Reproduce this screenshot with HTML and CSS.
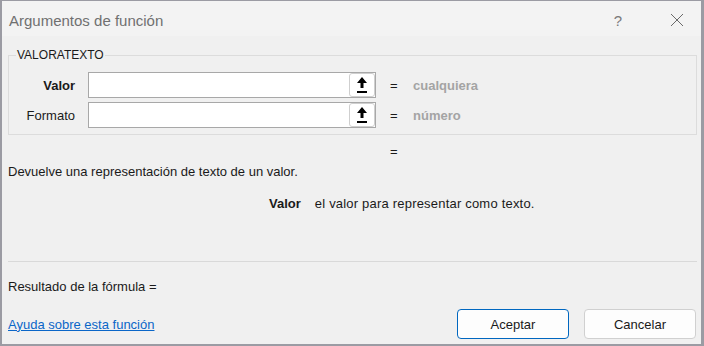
FILE: index.html
```html
<!DOCTYPE html>
<html lang="es">
<head>
<meta charset="utf-8">
<title>Argumentos de función</title>
<link rel="stylesheet" href="styles.css">
</head>
<body>
<div class="window">
  <div class="titlebar">
    <div class="title">Argumentos de función</div>
    <div class="help">?</div>
    <div class="close">
      <svg width="14" height="14" viewBox="0 0 14 14"><path d="M1 1 L13 13 M13 1 L1 13" stroke="#6a6a6a" stroke-width="1" fill="none"/></svg>
    </div>
  </div>
  <div class="content">
    <div class="group">
      <div class="legend">VALORATEXTO</div>
      <div class="row">
        <div class="label strong">Valor</div>
        <div class="field">
          <div class="ref-btn">
            <svg width="26" height="24" viewBox="0 0 26 24"><path d="M13 4 L18 10 L14.5 10 L14.5 15 L11.5 15 L11.5 10 L8 10 Z" fill="#000"/><rect x="8" y="18" width="10" height="2" fill="#000"/></svg>
          </div>
        </div>
        <div class="eq">=</div>
        <div class="value">cualquiera</div>
      </div>
      <div class="row">
        <div class="label">Formato</div>
        <div class="field">
          <div class="ref-btn">
            <svg width="26" height="24" viewBox="0 0 26 24"><path d="M13 4 L18 10 L14.5 10 L14.5 15 L11.5 15 L11.5 10 L8 10 Z" fill="#000"/><rect x="8" y="18" width="10" height="2" fill="#000"/></svg>
          </div>
        </div>
        <div class="eq">=</div>
        <div class="value">número</div>
      </div>
    </div>
    <div class="total-eq">=</div>
    <div class="desc">Devuelve una representación de texto de un valor.</div>
    <div class="argdesc"><span class="strong argname">Valor</span><span class="argtext">el valor para representar como texto.</span></div>
    <div class="sep"></div>
    <div class="result">Resultado de la fórmula =</div>
    <div class="footer">
      <a class="help-link" href="#">Ayuda sobre esta función</a>
      <div class="buttons">
        <button class="btn primary">Aceptar</button>
        <button class="btn">Cancelar</button>
      </div>
    </div>
  </div>
</div>
</body>
</html>
```
FILE: styles.css
```css
html, body {
  margin: 0;
  padding: 0;
  overflow: hidden;
}
body {
  font-family: "Liberation Sans", Arial, sans-serif;
  font-size: 13px;
  color: #1a1a1a;
  background: #f0f0f0;
}
.window {
  box-sizing: border-box;
  width: 704px;
  height: 346px;
  border-style: solid;
  border-color: #9b9ba3;
  border-width: 1px 3px 2px 2px;
  background: #f0f0f0;
}
.titlebar {
  height: 35px;
  background: #f3f3f3;
  display: flex;
  align-items: center;
  padding-left: 7px;
}
.title {
  font-size: 15px;
  color: #707070;
  flex: 1;
  padding-top: 3px;
}
.help {
  font-size: 15px;
  color: #7a7a7a;
  margin-right: 48px;
  padding-top: 3px;
}
.close {
  width: 14px;
  height: 14px;
  margin-right: 17px;
  margin-top: 3px;
}
.close svg { display: block; }
.content {
  padding: 0 4px 0 6px;
}
.group {
  position: relative;
  margin-top: 19px;
  border: 1px solid #dcdcdc;
  padding: 16px 0 6px 0;
}
.legend {
  position: absolute;
  top: -8px;
  left: 7px;
  padding: 0 1px;
  background: #f0f0f0;
  font-size: 12px;
  line-height: 14px;
  color: #1a1a1a;
}
.row {
  display: flex;
  align-items: center;
  height: 26px;
}
.row + .row {
  margin-top: 4px;
}
.label {
  width: 66px;
  margin-right: 13px;
  text-align: right;
}
.strong {
  font-weight: bold;
}
.field {
  box-sizing: border-box;
  width: 288px;
  height: 26px;
  border: 1px solid #a8a8a8;
  background: #fff;
  display: flex;
  justify-content: flex-end;
  align-items: center;
}
.ref-btn {
  box-sizing: border-box;
  width: 26px;
  height: 24px;
  border: 1px solid #cfcfcf;
  border-radius: 3px;
  background: #fff;
}
.ref-btn svg {
  display: block;
  margin: -1px;
}
.eq {
  margin-left: 14px;
  width: 23px;
}
.value {
  font-weight: bold;
  color: #a4a4a4;
}
.total-eq {
  margin-top: 9px;
  margin-left: 382px;
  line-height: 16px;
  height: 16px;
}
.desc {
  margin-top: 4px;
  line-height: 16px;
  height: 16px;
}
.argdesc {
  margin-top: 16px;
  padding-left: 261px;
  line-height: 16px;
  height: 16px;
}
.argname {
  margin-right: 14px;
}
.argtext {
  letter-spacing: 0.2px;
}
.sep {
  margin-top: 49px;
  height: 1px;
  background: #d9d9d9;
}
.result {
  margin-top: 17px;
  line-height: 16px;
  height: 16px;
}
.footer {
  margin-top: 14px;
  display: flex;
  align-items: center;
  justify-content: space-between;
  padding-right: 1px;
}
.help-link {
  color: #0a66c8;
  text-decoration: underline;
}
.buttons {
  display: flex;
  gap: 15px;
}
.btn {
  box-sizing: border-box;
  width: 112px;
  height: 30px;
  border: 1px solid #d0d0d0;
  border-radius: 4px;
  background: #fdfdfd;
  font-family: "Liberation Sans", Arial, sans-serif;
  font-size: 13px;
  color: #1a1a1a;
  padding: 0;
}
.btn.primary {
  border-color: #0067c0;
}
```
